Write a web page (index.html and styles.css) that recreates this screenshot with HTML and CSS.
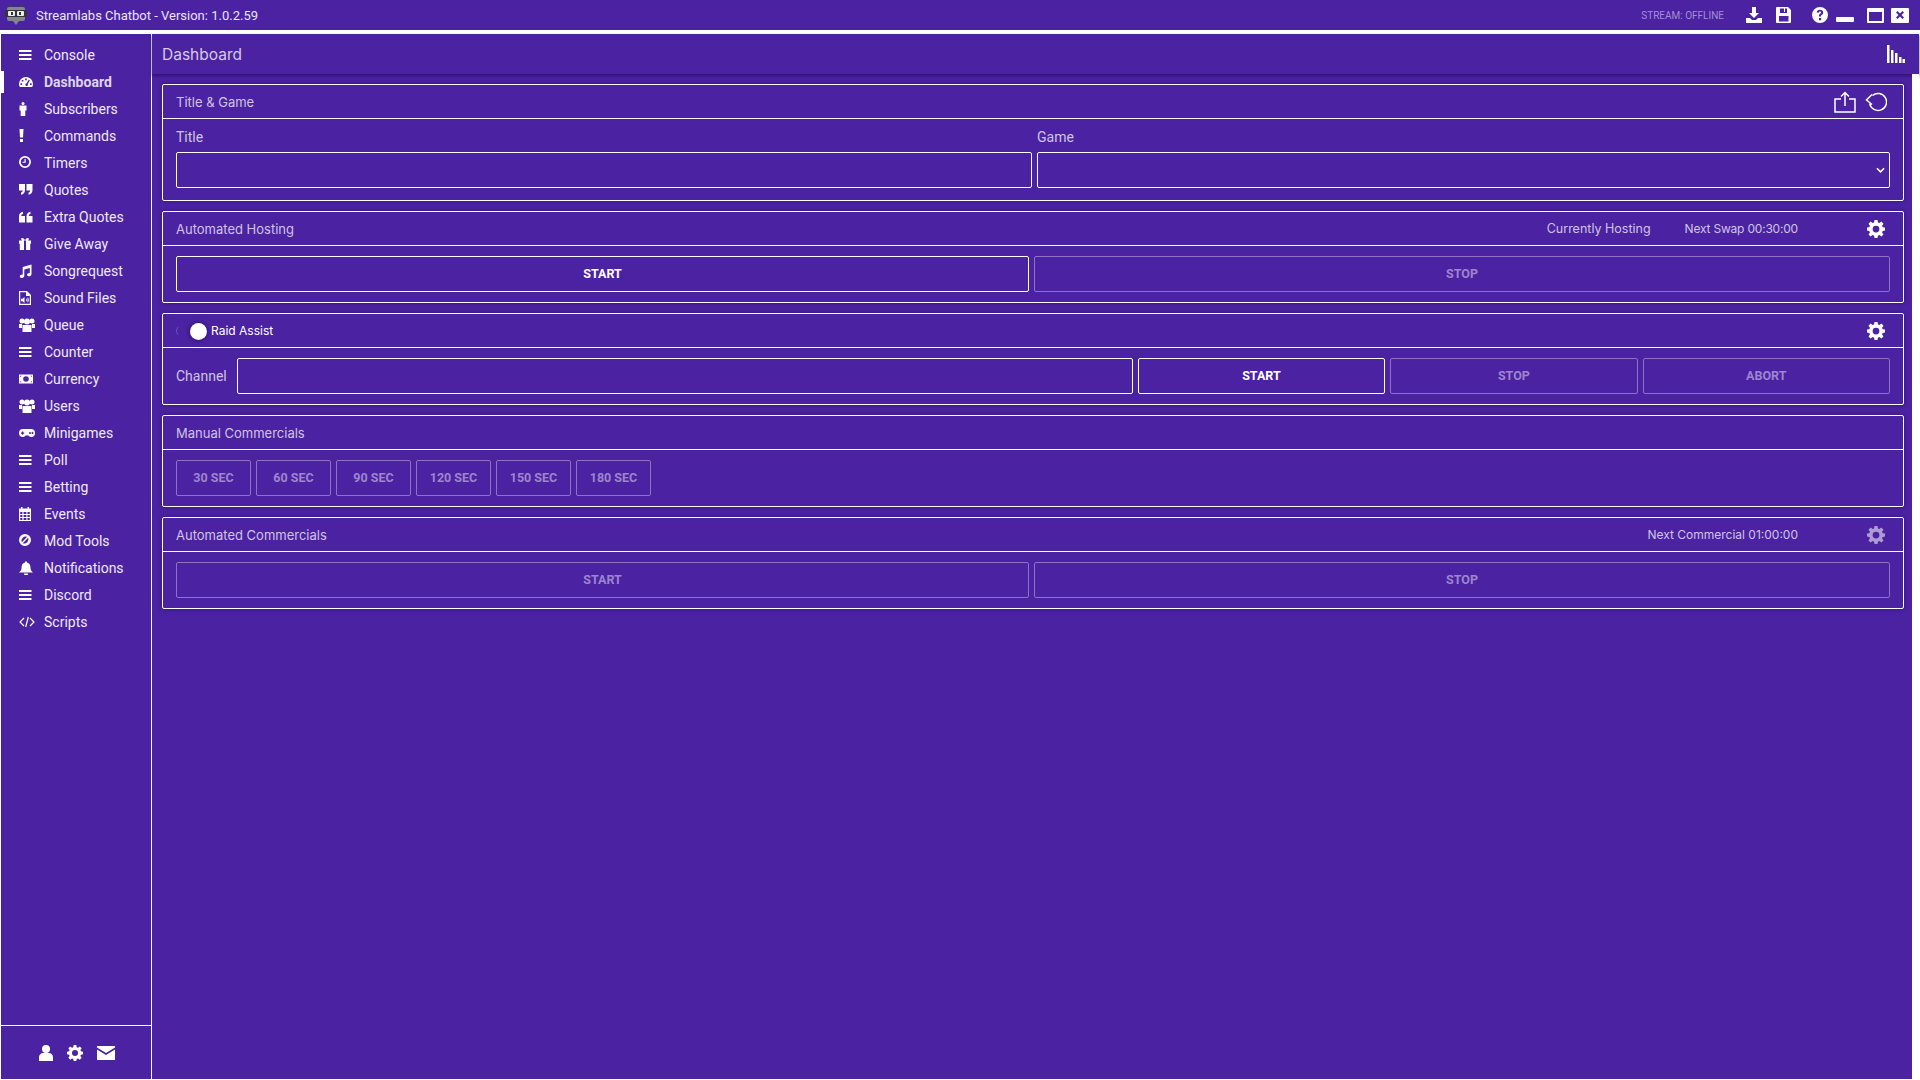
FILE: index.html
```html
<!DOCTYPE html>
<html lang="en">
<head>
    <meta charset="UTF-8">
    <title>Streamlabs Chatbot</title>
    <link rel="stylesheet" href="styles.css">
</head>
<body>
    <svg class="sprites" width="0" height="0">
        <symbol id="i-bars" viewBox="0 0 14 14"><path d="M0 2h12.500v2H0zM0 6h12.500v2H0zM0 10h12.500v2H0z"/></symbol>
        <symbol id="i-gear" viewBox="0 0 24 24"><path fill-rule="evenodd" d="M10 0h4l.6 3.200 1.900.8 2.700-1.900 2.800 2.800-1.900 2.700.8 1.900 3.100.5v4l-3.100.6-.8 1.900 1.900 2.700-2.800 2.800-2.700-1.900-1.900.8-.6 3.100h-4l-.6-3.100-1.900-.8-2.700 1.900-2.800-2.800 1.900-2.700-.8-1.900L0 14v-4l3.100-.5.8-1.900L2 4.900l2.800-2.800 2.700 1.900 1.900-.8zM12 7.500a4.500 4.500 0 1 0 0 9 4.500 4.500 0 0 0 0-9z"/></symbol>
        <symbol id="i-group" viewBox="0 0 16 14"><circle cx="3" cy="3" r="2.500"/><circle cx="13" cy="3" r="2.500"/><circle cx="8" cy="3.500" r="3"/><path d="M0 6h3v4H0zM13 6h3v4h-3zM3.500 7h9v7h-9z"/></symbol>
    </svg>

    <header class="titlebar">
        <svg class="logo" viewBox="0 0 22 22" width="22" height="22">
            <path fill="#3f4046" d="M4 0l4 3h6l4-3v6H4z"/>
            <path fill="#83878c" d="M4 3h14a2 2 0 0 1 2 2v10a2 2 0 0 1-2 2h-4l-3 4-3-4H4a2 2 0 0 1-2-2V5a2 2 0 0 1 2-2z"/>
            <rect x="0" y="6" width="22" height="7" rx="2" fill="#33353a"/>
            <rect x="3" y="7" width="7" height="5" rx="1" fill="#eceeee"/>
            <rect x="12" y="7" width="7" height="5" rx="1" fill="#eceeee"/>
            <rect x="6" y="8" width="2" height="3" fill="#33353a"/>
            <rect x="14" y="8" width="2" height="3" fill="#33353a"/>
        </svg>
        <span class="app-name">Streamlabs Chatbot - Version: 1.0.2.59</span>
        <span class="stream-status">STREAM: OFFLINE</span>
        <div class="win-tools">
            <svg class="t-download" viewBox="0 0 16 16" width="16" height="16"><path d="M6 0h4v6h3l-5 5-5-5h3zM0 11h4l2 2h4l2-2h4v5H0z"/></svg>
            <svg class="t-save" viewBox="0 0 16 16" width="16" height="16"><path fill-rule="evenodd" d="M1 0h11l3 3v12a1 1 0 0 1-1 1H1a1 1 0 0 1-1-1V1a1 1 0 0 1 1-1zm3 1.500V6h7V1.500h-2V5H8V1.500zM3 9v5.500h9.500V9z"/></svg>
            <svg class="t-help" viewBox="0 0 16 16" width="16" height="16"><path fill-rule="evenodd" d="M8 0a8 8 0 1 1 0 16A8 8 0 0 1 8 0zM7 11v2.200h2.200V11zM8 2.800c-1.900 0-3.100 1-3.300 2.700l2 .3c.1-.8.500-1.200 1.200-1.200s1.100.4 1.100 1c0 .5-.3.800-.9 1.200-1 .7-1.200 1.300-1.200 2.600h2c0-.8.100-1 .8-1.500.9-.6 1.500-1.300 1.500-2.400 0-1.600-1.300-2.700-3.200-2.700z"/></svg>
            <span class="t-min"></span>
            <span class="t-max"></span>
            <span class="t-close">
                <svg viewBox="0 0 10 10" width="10" height="10"><path d="M1 2.500L2.500 1 5 3.500 7.500 1 9 2.500 6.500 5 9 7.500 7.500 9 5 6.500 2.500 9 1 7.500 3.500 5z"/></svg>
            </span>
        </div>
    </header>

    <div class="app">
        <nav class="sidebar">
            <ul class="menu">
                <li class="menu-item"><svg class="ico"><use href="#i-bars"/></svg>Console</li>
                <li class="menu-item active">
                    <svg class="ico" viewBox="0 0 14 14"><path fill-rule="evenodd" d="M7 2a7 7 0 0 1 7 7c0 1.300-.3 2.300-.9 3H.9C.3 11.300 0 10.300 0 9a7 7 0 0 1 7-7zM6.200 3.500v1.800h1.600V3.500zM2.800 5v1.600h1.600V5zM9.800 4.800L7.600 8.300a1.300 1.300 0 1 0 1.200.6l2.100-3.400zM1.500 8.300v1.600h1.600V8.300zM11 8.300v1.600h1.600V8.300z"/></svg>
                    Dashboard
                </li>
                <li class="menu-item">
                    <svg class="ico" viewBox="0 0 14 14"><circle cx="4" cy="1.500" r="1.500"/><path d="M.5 3.500h7v5H6.300V14H1.700V8.500H.5z"/></svg>
                    Subscribers
                </li>
                <li class="menu-item">
                    <svg class="ico" viewBox="0 0 14 14"><path d="M.5 0h4L4 8.500H1zM1 10h3v3H1z"/></svg>
                    Commands
                </li>
                <li class="menu-item">
                    <svg class="ico" viewBox="1 1 14 14"><path fill-rule="evenodd" d="M7 1a6 6 0 1 1 0 12A6 6 0 0 1 7 1zm0 1.800a4.200 4.200 0 1 0 0 8.400 4.200 4.200 0 0 0 0-8.400zM6.500 4h1.200v3.800H4.500V6.800h2z"/></svg>
                    Timers
                </li>
                <li class="menu-item">
                    <svg class="ico" viewBox="0 0 14 14"><path d="M0 1h6v6c0 2.800-1.500 4.300-4 4.700V9.500c1-.2 1.700-.8 1.700-2H0zM7.500 1h6v6c0 2.800-1.500 4.300-4 4.700V9.500c1-.2 1.700-.8 1.700-2H7.500z"/></svg>
                    Quotes
                </li>
                <li class="menu-item">
                    <svg class="ico" viewBox="0 0 14 14"><path d="M6 12.500H0V6.500C0 3.700 1.500 2.200 4 1.800V4C3 4.200 2.300 4.800 2.300 6H6zM13.500 12.500h-6v-6c0-2.800 1.500-4.300 4-4.700V4c-1 .2-1.700.8-1.700 2h3.700z"/></svg>
                    Extra Quotes
                </li>
                <li class="menu-item">
                    <svg class="ico" viewBox="0 0 14 14"><path fill-rule="evenodd" d="M0 3.500h3.200C2 2.800 1.800 1.800 2.500 1.200c.9-.7 2.500 0 3.500 2 1-2 2.600-2.700 3.500-2 .7.600.5 1.600-.7 2.300H12v3.300h-.8V13H.8V6.800H0zM5 3.500v9.500h2V3.500z"/></svg>
                    Give Away
                </li>
                <li class="menu-item">
                    <svg class="ico" viewBox="0 0 14 14"><path d="M3.700 3L12.500.5v9.700c0 1.200-1.200 2.100-2.500 2.100-1.200 0-2-.6-2-1.500 0-1.100 1.200-1.800 2.400-1.800l.4.100V4L5.300 5.500v6.300c0 1.200-1.200 2.100-2.500 2.100-1.200 0-2-.6-2-1.500 0-1.100 1.200-1.800 2.400-1.800l.5.100z"/></svg>
                    Songrequest
                </li>
                <li class="menu-item">
                    <svg class="ico" viewBox="0 0 14 14"><path fill-rule="evenodd" d="M0 0h8l4 4v10H0zm1.200 1.200v11.600h9.600V5H7V1.200zM5.500 6v6L3.500 10.300H2V7.700h1.500zM7 7.200c1 .9 1 2.700 0 3.600zM8.500 6.200c1.800 1.500 1.800 4.100 0 5.600z"/></svg>
                    Sound Files
                </li>
                <li class="menu-item"><svg class="ico wide"><use href="#i-group"/></svg>Queue</li>
                <li class="menu-item"><svg class="ico"><use href="#i-bars"/></svg>Counter</li>
                <li class="menu-item">
                    <svg class="ico" viewBox="0 0 14 14"><path fill-rule="evenodd" d="M0 2.500h14v9H0zm1.200 1.200v6.600h1.300a1.800 1.800 0 0 0-1.300-1.300V5a1.800 1.800 0 0 0 1.300-1.300zm10.300 0A1.800 1.800 0 0 0 12.800 5v4a1.800 1.800 0 0 0-1.300 1.300h1.300V3.700zM7 4.200a2.800 2.800 0 1 0 0 5.600 2.800 2.800 0 0 0 0-5.600z"/></svg>
                    Currency
                </li>
                <li class="menu-item"><svg class="ico wide"><use href="#i-group"/></svg>Users</li>
                <li class="menu-item">
                    <svg class="ico wide" viewBox="0 0 16 14"><path fill-rule="evenodd" d="M4 3h8a4 4 0 0 1 0 8c-1.500 0-2-1-2.500-1.500h-3C6 10 5.500 11 4 11a4 4 0 0 1 0-8zM3 5.500v1H2v1.200h1v1h1.200v-1h1V6.500h-1v-1zM11 6a1 1 0 1 0 0 2 1 1 0 0 0 0-2zM13.500 6a1 1 0 1 0 0 2 1 1 0 0 0 0-2z"/></svg>
                    Minigames
                </li>
                <li class="menu-item"><svg class="ico"><use href="#i-bars"/></svg>Poll</li>
                <li class="menu-item"><svg class="ico"><use href="#i-bars"/></svg>Betting</li>
                <li class="menu-item">
                    <svg class="ico" viewBox="1 0 14 14"><path fill-rule="evenodd" d="M3 0h1.500v1.500h5V0H11v1.500h2V14H1V1.500h2zM2.200 5v2h2.200V5zm3.400 0v2h2.800V5zm3.900 0v2h2.300V5zM2.200 8v2h2.200V8zm3.400 0v2h2.800V8zm3.900 0v2h2.300V8zM2.200 11v2h2.200v-2zm3.400 0v2h2.800v-2zm3.900 0v2h2.300v-2z"/></svg>
                    Events
                </li>
                <li class="menu-item">
                    <svg class="ico" viewBox="1 1 14 14"><path fill-rule="evenodd" d="M7 1a6 6 0 1 1 0 12A6 6 0 0 1 7 1zM3.800 9.200L9.200 3.800a4.200 4.200 0 0 0-5.400 5.400zM10.200 4.800L4.800 10.200a4.200 4.200 0 0 0 5.400-5.400z"/></svg>
                    Mod Tools
                </li>
                <li class="menu-item">
                    <svg class="ico" viewBox="0 0 14 14"><path d="M6 .5h2v1C10.500 2 11.500 4 11.500 7c0 2 1 3 2.500 4.500H0C1.500 10 2.500 9 2.500 7c0-3 1-5 3.500-5.500zM5 12.500h4a2 2 0 0 1-4 0z"/></svg>
                    Notifications
                </li>
                <li class="menu-item"><svg class="ico"><use href="#i-bars"/></svg>Discord</li>
                <li class="menu-item">
                    <svg class="ico wide" viewBox="0 0 16 14"><path d="M5 3L1 7l4 4M11 3l4 4-4 4M9.300 2L6.700 12" fill="none" stroke="#fff" stroke-width="1.200"/></svg>
                    Scripts
                </li>
            </ul>
            <div class="side-foot">
                <svg viewBox="0 0 14 16" width="14" height="16"><circle cx="7" cy="4" r="4"/><path d="M0 16v-3.500C0 9.500 2 8 4 8h6c2 0 4 1.500 4 4.500V16z"/></svg>
                <svg width="16" height="16"><use href="#i-gear"/></svg>
                <svg viewBox="0 0 18 14" width="18" height="14"><path d="M0 0h18v1.500L9 7 0 1.500zM0 3.500L9 9l9-5.500V14H0z"/></svg>
            </div>
        </nav>

        <main class="content">
            <div class="page-head">
                <span class="page-title">Dashboard</span>
                <svg class="chart" viewBox="0 0 18 18" width="18" height="18"><path d="M0 0h2.500v18H0zM4 5h2.500v13H4zM8 8h2.500v10H8zM12 12h2.500v6H12zM15.500 14H18v4h-2.500z"/></svg>
            </div>

            <div class="panels">
                <section class="panel">
                    <div class="panel-head">
                        <span class="panel-title">Title &amp; Game</span>
                        <div class="head-tools">
                            <svg viewBox="0 0 22 22" width="22" height="22" fill="none" stroke="#fff" stroke-width="1.500"><path d="M7 8H1v13h20V8h-6M11 15V2M7 5.500L11 1.500l4 4"/></svg>
                            <svg viewBox="0 0 22 22" width="22" height="22" fill="none" stroke="#fff" stroke-width="1.500"><path d="M7.500 4.500A8.500 8.500 0 1 1 4.700 12.700M7 3.500L1.500 9 7 13.500"/></svg>
                        </div>
                    </div>
                    <div class="panel-body two-col">
                        <div class="field">
                            <label class="label">Title</label>
                            <input class="input" type="text">
                        </div>
                        <div class="field">
                            <label class="label">Game</label>
                            <div class="select">
                                <svg viewBox="0 0 10 6" width="9" height="6" fill="none" stroke="#fff" stroke-width="1.800"><path d="M1 1l4 4 4-4"/></svg>
                            </div>
                        </div>
                    </div>
                </section>

                <section class="panel">
                    <div class="panel-head">
                        <span class="panel-title">Automated Hosting</span>
                        <span class="head-info hosting">Currently Hosting</span>
                        <span class="head-info swap">Next Swap 00:30:00</span>
                        <svg class="gear" width="18" height="18"><use href="#i-gear"/></svg>
                    </div>
                    <div class="panel-body btn-row">
                        <button class="btn on">START</button>
                        <button class="btn">STOP</button>
                    </div>
                </section>

                <section class="panel">
                    <div class="panel-head">
                        <span class="toggle"><span class="knob"></span></span>
                        <span class="panel-title raid">Raid Assist</span>
                        <svg class="gear" width="18" height="18"><use href="#i-gear"/></svg>
                    </div>
                    <div class="panel-body raid-row">
                        <label class="label">Channel</label>
                        <input class="input" type="text">
                        <button class="btn on">START</button>
                        <button class="btn">STOP</button>
                        <button class="btn">ABORT</button>
                    </div>
                </section>

                <section class="panel">
                    <div class="panel-head">
                        <span class="panel-title">Manual Commercials</span>
                    </div>
                    <div class="panel-body sec-row">
                        <button class="btn sec">30 SEC</button>
                        <button class="btn sec">60 SEC</button>
                        <button class="btn sec">90 SEC</button>
                        <button class="btn sec">120 SEC</button>
                        <button class="btn sec">150 SEC</button>
                        <button class="btn sec">180 SEC</button>
                    </div>
                </section>

                <section class="panel">
                    <div class="panel-head">
                        <span class="panel-title">Automated Commercials</span>
                        <span class="head-info">Next Commercial 01:00:00</span>
                        <svg class="gear off" width="18" height="18"><use href="#i-gear"/></svg>
                    </div>
                    <div class="panel-body btn-row">
                        <button class="btn">START</button>
                        <button class="btn">STOP</button>
                    </div>
                </section>
            </div>
        </main>
    </div>
</body>
</html>
```

FILE: styles.css
```css
* {
    margin: 0;
    padding: 0;
    box-sizing: border-box;
}

body {
    width: 1920px;
    height: 1080px;
    overflow: hidden;
    background-color: #4b22a1;
    color: #fff;
    font-family: 'Roboto', sans-serif;
    fill: #fff;
}

.sprites {
    display: block;
    height: 0;
}

/* Barra de titulo */
.titlebar {
    display: flex;
    align-items: center;
    height: 30px;
    padding-left: 5px;
}

.logo {
    flex-shrink: 0;
}

.app-name {
    margin-left: 9px;
    font-size: 13px;
    color: #eae4f5;
}

.stream-status {
    margin-left: auto;
    font-size: 10px;
    color: #a48fd3;
}

.win-tools {
    display: flex;
    align-items: center;
    margin-left: 22px;
    margin-right: 11px;
}

.t-save {
    margin-left: 14px;
}

.t-help {
    margin-left: 20px;
}

.t-min {
    width: 18px;
    height: 5px;
    margin: 9px 0 0 8px;
    background-color: #fff;
    border-radius: 1px;
}

.t-max {
    width: 17px;
    height: 15px;
    margin-left: 13px;
    border: 2px solid #fff;
    border-top-width: 4px;
    border-radius: 1px;
}

.t-close {
    display: flex;
    align-items: center;
    justify-content: center;
    width: 18px;
    height: 15px;
    margin-left: 7px;
    background-color: #fff;
    border-radius: 1px;
    fill: #4b22a1;
}

.app {
    display: flex;
    height: 1050px;
    border: 1px solid #fff;
    border-top-width: 4px;
}

/* Menu lateral */
.sidebar {
    display: flex;
    flex-direction: column;
    width: 151px;
    flex-shrink: 0;
    border-right: 1px solid #fff;
}

.menu {
    flex: 1;
    list-style: none;
    padding-top: 7px;
}

.menu-item {
    position: relative;
    display: flex;
    align-items: center;
    height: 27px;
    padding-left: 18px;
    font-size: 14px;
    color: #eee9f7;
}

.ico {
    width: 14px;
    height: 14px;
    margin-right: 11px;
    flex-shrink: 0;
}

.ico.wide {
    width: 16px;
    margin-right: 9px;
}

.menu-item.active {
    font-weight: 700;
    color: #ddd5ec;
}

.menu-item.active::before {
    content: '';
    position: absolute;
    left: -1px;
    top: 3px;
    width: 4px;
    height: 22px;
    background-color: #fff;
}

.side-foot {
    display: flex;
    align-items: center;
    justify-content: center;
    gap: 14px;
    height: 54px;
    padding-left: 2px;
    border-top: 1px solid #fff;
}

/* Contenido */
.content {
    flex: 1;
    display: flex;
    flex-direction: column;
    min-width: 0;
}

.page-head {
    display: flex;
    align-items: center;
    justify-content: space-between;
    height: 40px;
    padding: 0 14px 0 10px;
    box-shadow: 0 2px 3px rgba(40, 10, 100, 0.7);
}

.page-title {
    font-family: 'Inter', sans-serif;
    font-size: 15.5px;
    color: #d5cae9;
}

.panels {
    flex: 1;
    display: flex;
    flex-direction: column;
    gap: 10px;
    padding: 10px 8px 0 10px;
    border-right: 7px solid #fff;
}

.panel {
    border: 1px solid #fff;
    border-radius: 2px;
    box-shadow: 0 0 4px rgba(40, 10, 100, 0.6);
}

.panel-head {
    display: flex;
    align-items: center;
    height: 34px;
    padding: 0 18px 0 13px;
    border-bottom: 1px solid #fff;
}

.panel-title {
    margin-right: auto;
    font-family: 'Inter', sans-serif;
    font-size: 13px;
    color: #d0c4e6;
}

.head-tools {
    display: flex;
    gap: 9px;
    margin-right: -2px;
}

.head-info {
    margin-right: 69px;
    font-family: 'Inter', sans-serif;
    font-size: 12px;
    color: #d0c4e6;
}

.head-info.hosting {
    margin-right: 34px;
    font-size: 12.5px;
}

.head-info.swap {
    letter-spacing: -0.2px;
}

.gear.off {
    opacity: 0.55;
}

.panel-body {
    padding: 0 13px;
}

.two-col {
    display: grid;
    grid-template-columns: 856fr 853fr;
    gap: 5px;
    padding: 9px 13px 12px;
}

.label {
    display: block;
    margin-bottom: 6px;
    font-size: 14px;
    line-height: 18px;
    color: #d0c4e6;
}

.input,
.select {
    display: flex;
    align-items: center;
    justify-content: flex-end;
    width: 100%;
    height: 36px;
    padding-right: 4px;
    background: transparent;
    border: 1px solid #fff;
    border-radius: 2px;
    outline: none;
}

.btn-row {
    display: grid;
    grid-template-columns: 853fr 856fr;
    gap: 5px;
    padding-top: 10px;
    padding-bottom: 10px;
}

.btn {
    height: 36px;
    padding-bottom: 2px;
    font-family: 'Roboto', sans-serif;
    font-size: 12.5px;
    font-weight: 700;
    color: #9d86cf;
    background: transparent;
    border: 1px solid #8d72c6;
    border-radius: 2px;
}

.btn.on {
    color: #fff;
    border-color: #fff;
}

.raid-row {
    display: flex;
    align-items: center;
    gap: 5px;
    padding-top: 10px;
    padding-bottom: 10px;
}

.raid-row .label {
    margin: 0 5px 0 0;
}

.raid-row .input {
    width: 896px;
    flex-shrink: 0;
}

.raid-row .btn {
    flex: 1;
}

.sec-row {
    display: flex;
    gap: 5px;
    padding-top: 10px;
    padding-bottom: 10px;
}

.btn.sec {
    width: 75px;
}

.toggle {
    position: relative;
    width: 12px;
    height: 12px;
    margin-right: 23px;
    border: 1px solid transparent;
    border-left-color: #6b4cb3;
    border-radius: 50%;
}

.knob {
    position: absolute;
    left: 13px;
    top: -3px;
    width: 17px;
    height: 17px;
    background-color: #fff;
    border-radius: 50%;
    box-shadow: 0 0 4px #1f0a55;
}

.raid {
    font-size: 12px;
    font-weight: 400;
    color: #fff;
}
```
